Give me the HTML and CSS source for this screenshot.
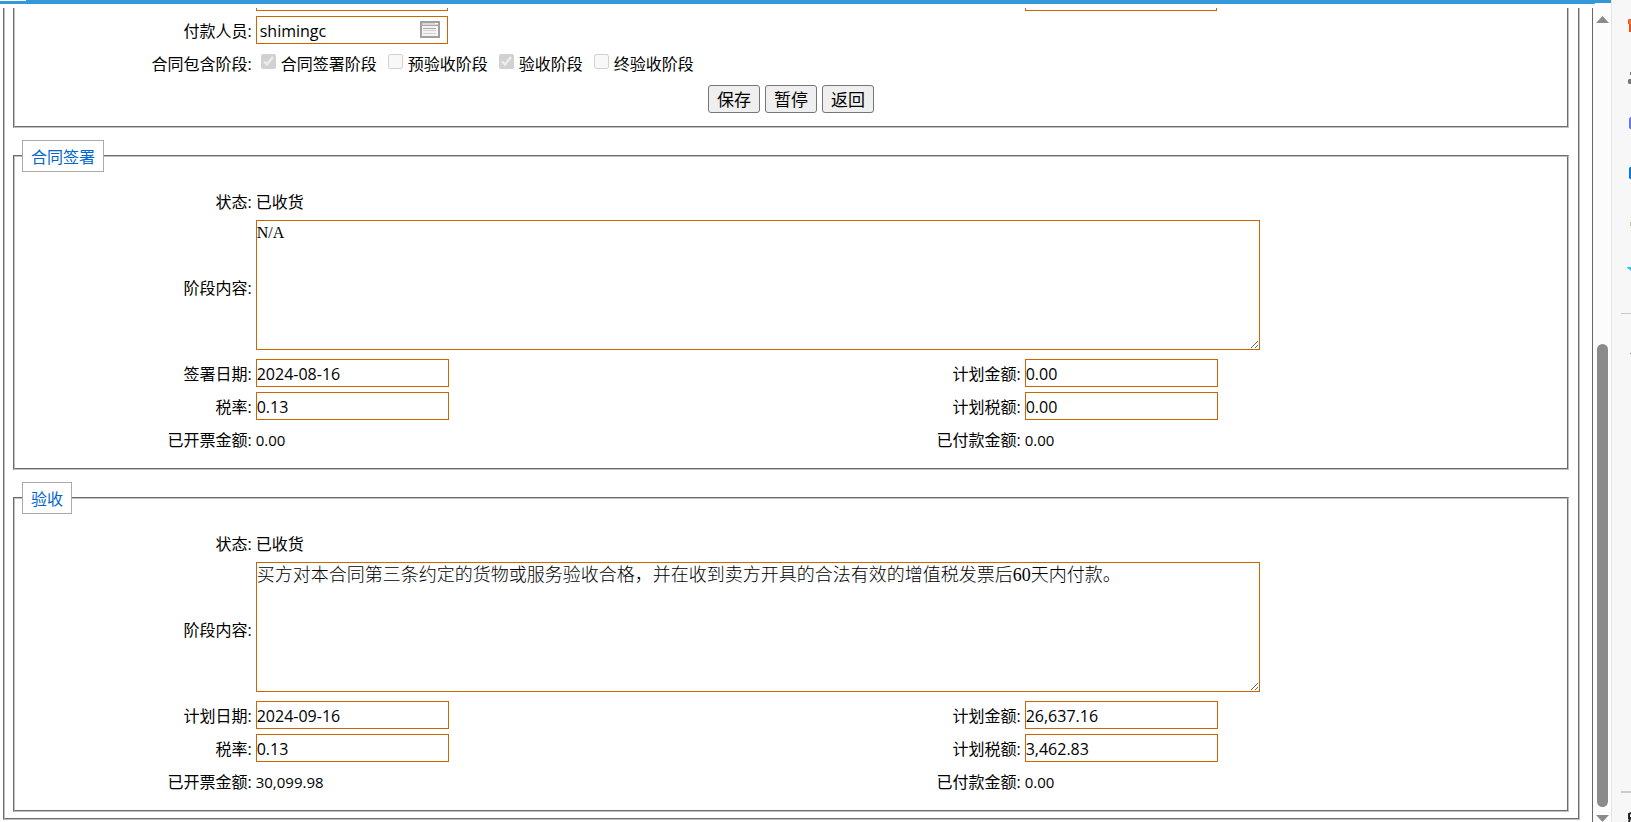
FILE: index.html
```html
<!DOCTYPE html>
<html lang="zh-CN">
<head>
<meta charset="utf-8">
<title>合同付款</title>
<link rel="stylesheet" href="styles.css">
</head>
<body>
<div class="window">
  <div class="main">
    <div class="loadbar"></div>
    <div class="view">
      <main class="frame">
        <fieldset class="outer">
          <form>
            <fieldset class="panel panel-first">
              <div class="grid">
                <span class="label"></span>
                <div class="value"><input class="field field-person" type="text" aria-label="开票人员"></div>
                <span class="label"></span>
                <div class="value"><input class="field field-person" type="text" aria-label="付款日期"></div>
                <label class="label" for="payer">付款人员:</label>
                <div class="value wide">
                  <div class="picker">
                    <input class="field field-person" id="payer" type="text" value="shimingc">
                    <button class="picker-button" type="button" aria-label="选择人员">
                      <svg width="20" height="17" viewBox="0 0 20 17">
                        <rect x="1" y="1" width="18" height="15" fill="#f4f4f4" stroke="#a0a0a0" stroke-width="2"/>
                        <path d="M2 2h16v2H2z" fill="#d8d8d8"/>
                        <path d="M1 4.500h18" stroke="#a8a8a8"/>
                        <path d="M15 2.500h3" stroke="#fff"/>
                        <path d="M3 7.500h13" stroke="#aaa"/>
                        <path d="M3 9.500h13M3 12.500h13" stroke="#d2d2d2"/>
                      </svg>
                    </button>
                  </div>
                </div>
                <span class="label">合同包含阶段:</span>
                <div class="value wide stages">
                  <label class="stage"><input type="checkbox" checked disabled>合同签署阶段</label>
                  <label class="stage"><input type="checkbox" disabled>预验收阶段</label>
                  <label class="stage"><input type="checkbox" checked disabled>验收阶段</label>
                  <label class="stage"><input type="checkbox" disabled>终验收阶段</label>
                </div>
              </div>
              <div class="actions">
                <button class="button" type="button">保存</button>
                <button class="button" type="button">暂停</button>
                <button class="button" type="button">返回</button>
              </div>
            </fieldset>

            <fieldset class="panel">
              <legend>合同签署</legend>
              <div class="grid">
                <span class="label">状态:</span>
                <span class="value wide">已收货</span>
                <label class="label" for="sign-content">阶段内容:</label>
                <div class="value wide memo"><textarea class="content content-short" id="sign-content">N/A</textarea></div>
                <label class="label" for="sign-date">签署日期:</label>
                <div class="value"><input class="field" id="sign-date" type="text" value="2024-08-16"></div>
                <label class="label" for="sign-amount">计划金额:</label>
                <div class="value"><input class="field" id="sign-amount" type="text" value="0.00"></div>
                <label class="label" for="sign-rate">税率:</label>
                <div class="value"><input class="field" id="sign-rate" type="text" value="0.13"></div>
                <label class="label" for="sign-tax">计划税额:</label>
                <div class="value"><input class="field" id="sign-tax" type="text" value="0.00"></div>
                <span class="label">已开票金额:</span>
                <span class="value amount">0.00</span>
                <span class="label">已付款金额:</span>
                <span class="value amount">0.00</span>
              </div>
            </fieldset>

            <fieldset class="panel">
              <legend>验收</legend>
              <div class="grid">
                <span class="label">状态:</span>
                <span class="value wide">已收货</span>
                <label class="label" for="accept-content">阶段内容:</label>
                <div class="value wide memo"><textarea class="content" id="accept-content">买方对本合同第三条约定的货物或服务验收合格，并在收到卖方开具的合法有效的增值税发票后60天内付款。</textarea></div>
                <label class="label" for="accept-date">计划日期:</label>
                <div class="value"><input class="field" id="accept-date" type="text" value="2024-09-16"></div>
                <label class="label" for="accept-amount">计划金额:</label>
                <div class="value"><input class="field" id="accept-amount" type="text" value="26,637.16"></div>
                <label class="label" for="accept-rate">税率:</label>
                <div class="value"><input class="field" id="accept-rate" type="text" value="0.13"></div>
                <label class="label" for="accept-tax">计划税额:</label>
                <div class="value"><input class="field" id="accept-tax" type="text" value="3,462.83"></div>
                <span class="label">已开票金额:</span>
                <span class="value amount">30,099.98</span>
                <span class="label">已付款金额:</span>
                <span class="value amount">0.00</span>
              </div>
            </fieldset>
          </form>
        </fieldset>
      </main>
      <div class="scrollbar">
        <svg width="13" height="7" viewBox="0 0 13 7"><path d="M6.500 0L13 7H0z" fill="#8b8b8b"/></svg>
        <div class="track"><div class="thumb"></div></div>
        <svg width="13" height="7" viewBox="0 0 13 7"><path d="M6.500 7L13 0H0z" fill="#8b8b8b"/></svg>
      </div>
    </div>
  </div>
  <aside class="dock">
    <svg width="19" height="360" viewBox="0 0 19 360">
      <path d="M19 19h-2l-1 1v4h1v8h2z" fill="#e2541b"/>
      <path d="M19 20h-2v4h2z" fill="#f0703a"/>
      <path d="M19 72h-1v3h1zM19 79h-2l-1 1v3l1 1h2z" fill="#777"/>
      <path d="M19 117h-1l-1 2v9l1 1h1z" fill="#6a78e0"/>
      <path d="M19 167h-1l-1 1v10l1 1h1z" fill="#0a78d4"/>
      <path d="M19 222h-1v4h1z" fill="#a8d890"/>
      <path d="M19 267h-4l1 2h1l2 2z" fill="#35c0f5"/>
      <path d="M9 313.500h10" stroke="#ccc"/>
      <path d="M18 353h1v1h-1z" fill="#888"/>
    </svg>
    <svg width="19" height="32" viewBox="0 0 19 32">
      <path d="M9 2h10" stroke="#ccc" stroke-width="2"/>
      <path d="M19 23l-2 1v4h2M18 28l-1 4" fill="none" stroke="#222" stroke-width="2"/>
    </svg>
  </aside>
</div>
</body>
</html>
```
FILE: styles.css
```css
* {
  box-sizing: border-box;
}

body {
  margin: 0;
  background: #fff;
  color: #000;
  font: 16px/26px "Open Sans", "Noto Sans CJK SC", sans-serif;
}

.window {
  display: flex;
  height: 100vh;
  overflow: hidden;
}

.main {
  flex: 1;
  min-width: 0;
  display: flex;
  flex-direction: column;
}

.loadbar {
  height: 4px;
  margin-bottom: 4px;
  background:
    linear-gradient(#fff, #fff) left top / 26px 1px no-repeat,
    linear-gradient(#fff, #fff) right bottom / 16px 1px no-repeat,
    #3498db;
}

.view {
  flex: 1;
  min-height: 0;
  display: flex;
}

/* The form is scrolled to its end, so it rests on the bottom edge. */
.frame {
  flex: 1;
  min-width: 0;
  display: flex;
  flex-direction: column;
  justify-content: flex-end;
  overflow: hidden;
  padding: 0 12px 2px 3px;
  border-right: 1px solid #666;
}

fieldset {
  min-width: 0;
  margin: 0;
  border: 2px groove #c0c0c0;
}

.outer {
  flex: none;
  padding: 20px 9px 6px 8px;
}

.panel {
  padding: 15px 7px;
}

.panel + .panel {
  margin-top: 12px;
}

.panel-first {
  padding-bottom: 13px;
}

legend {
  height: 32px;
  padding: 0 8px;
  border: 1px solid #aaa;
  background: #fff;
  color: #06c;
  line-height: 32px;
}

.grid {
  display: grid;
  grid-template-columns: 15% 35% 15% 35%;
  row-gap: 5px;
  align-items: center;
}

.label {
  padding: 2px 1px 0 0;
  text-align: right;
}

.value {
  display: flex;
  min-height: 28px;
  padding-left: 3px;
}

span.value {
  padding-top: 2px;
}

.wide {
  grid-column: span 3;
}

.memo {
  margin-bottom: 4px;
}

.amount {
  font-size: 15px;
}

.field {
  width: 193px;
  height: 28px;
  padding: 2px 0 0;
  border: 1px solid #c60;
  outline: 0;
  background: #fff;
  color: #000;
  font: inherit;
  line-height: 24px;
}

.field-person {
  width: 192px;
  padding-left: 3px;
}

.picker {
  position: relative;
  display: flex;
}

.picker-button {
  position: absolute;
  top: 5px;
  right: 8px;
  display: flex;
  padding: 0;
  border: 0;
  background: none;
}

.content {
  width: 1004px;
  max-width: 100%;
  height: 130px;
  padding: 0;
  border: 1px solid #c60;
  outline: 0;
  color: #000;
  font: 18px/24px "Liberation Serif", "Noto Sans CJK SC", serif;
  font-weight: 300;
}

.content-short {
  font-size: 16px;
}

.stages {
  height: 28px;
  gap: 6px;
}

.stage {
  display: flex;
  align-items: flex-start;
  line-height: 30px;
}

.stage input {
  width: 15px;
  height: 15px;
  margin: 5px 5px 0;
}

.actions {
  display: flex;
  justify-content: center;
  gap: 5px;
  margin-top: 8px;
}

.button {
  width: 52px;
  height: 28px;
  padding: 2px 0 0;
  border: 1px solid #767676;
  border-radius: 3px;
  background: #efefef;
  color: #000;
  font: 17px/24px "Open Sans", "Noto Sans CJK SC", sans-serif;
}

.scrollbar {
  flex: none;
  width: 18px;
  display: flex;
  flex-direction: column;
  align-items: center;
  padding-top: 8px;
  background: #fcfcfc;
}

.scrollbar svg {
  flex: none;
}

.track {
  flex: 1;
  display: flex;
  flex-direction: column;
  justify-content: flex-end;
  padding-bottom: 8px;
}

.thumb {
  width: 11px;
  height: 59%;
  border-radius: 6px;
  background: #8b8b8b;
}

.dock {
  flex: none;
  width: 20px;
  display: flex;
  flex-direction: column;
  justify-content: space-between;
  border-left: 1px solid #e4e4e4;
  background: #f7f7f7;
}
```
